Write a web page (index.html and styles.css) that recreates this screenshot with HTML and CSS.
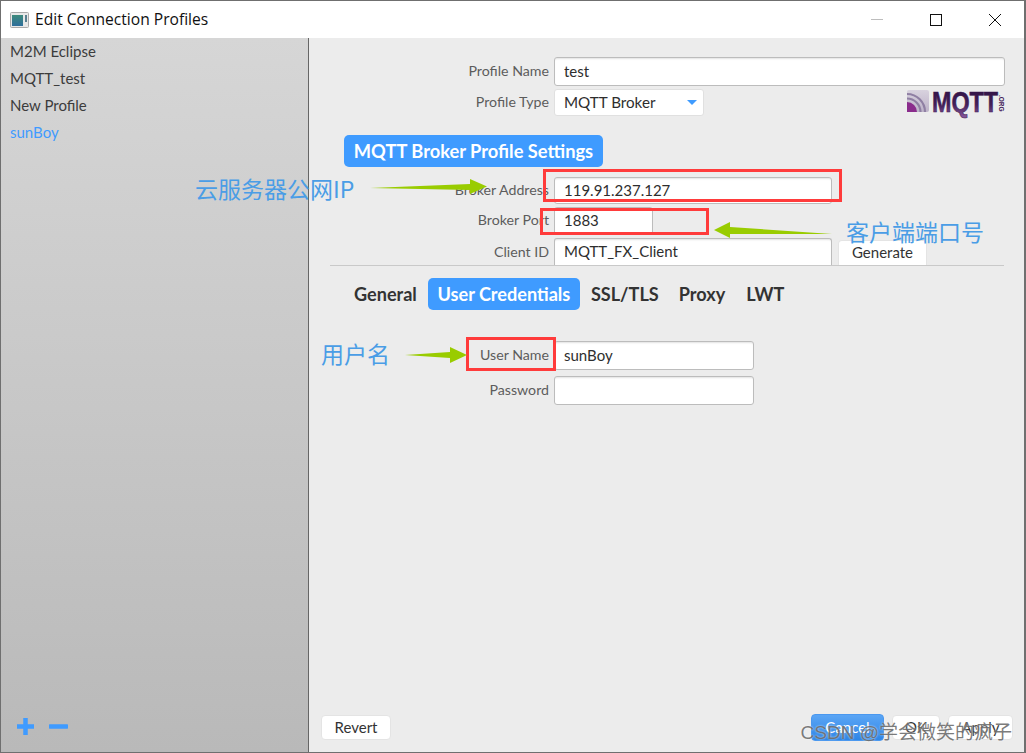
FILE: index.html
```html
<!DOCTYPE html>
<html lang="en">
<head>
<meta charset="utf-8">
<title>Edit Connection Profiles</title>
<link rel="stylesheet" href="styles.css">
</head>
<body>
<div class="window">
  <header class="titlebar">
    <svg class="app-icon" width="19" height="16" viewBox="0 0 19 16">
      <defs><linearGradient id="ai" x1="0" y1="0" x2="0" y2="1"><stop offset="0" stop-color="#3d8a7c"/><stop offset="1" stop-color="#2f6f9c"/></linearGradient></defs>
      <rect x="0.5" y="0.5" width="18" height="15" rx="1" fill="#e8e8e8" stroke="#aaa"/>
      <rect x="2" y="3" width="11" height="11" fill="url(#ai)"/>
      <rect x="15" y="3" width="2" height="7" fill="#5a7f8f"/>
    </svg>
    <span class="title">Edit Connection Profiles</span>
    <div class="win-controls">
      <svg width="14" height="14" viewBox="0 0 14 14"><path d="M1 6.5H13" stroke="#bdbdbd" stroke-width="1"/></svg>
      <svg width="14" height="14" viewBox="0 0 14 14"><rect x="1.5" y="1.5" width="11" height="11" fill="none" stroke="#111" stroke-width="1"/></svg>
      <svg width="14" height="14" viewBox="0 0 14 14"><path d="M1 1L13 13M13 1L1 13" stroke="#111" stroke-width="1"/></svg>
    </div>
  </header>
  <div class="content">
    <aside class="sidebar">
      <ul class="profiles">
        <li>M2M Eclipse</li>
        <li>MQTT_test</li>
        <li>New Profile</li>
        <li class="active">sunBoy</li>
      </ul>
      <div class="add-remove">
        <svg width="19" height="19" viewBox="0 0 19 19"><path d="M9.5 1V18M1 9.5H18" stroke="#3f9bff" stroke-width="4.5"/></svg>
        <svg width="19" height="19" viewBox="0 0 19 19"><path d="M1 9.5H18" stroke="#3f9bff" stroke-width="4.5" stroke-linecap="round"/></svg>
      </div>
    </aside>
    <main class="main">
      <div class="row row-name">
        <label>Profile Name</label>
        <input class="field" value="test" readonly>
      </div>
      <div class="row row-type">
        <label>Profile Type</label>
        <div class="select">MQTT Broker<span class="caret"></span></div>
        <svg class="mqtt-logo" width="98" height="26" viewBox="0 0 98 26">
          <defs>
            <linearGradient id="mq" x1="0" y1="0" x2="0" y2="1"><stop offset="0" stop-color="#2a0e3c"/><stop offset="0.6" stop-color="#43205a"/><stop offset="1" stop-color="#8a5aa0"/></linearGradient>
            <linearGradient id="mb" x1="0" y1="0" x2="0" y2="1"><stop offset="0" stop-color="#d8d2de"/><stop offset="1" stop-color="#bdb2c8"/></linearGradient>
          </defs>
          <rect x="0" y="0" width="22" height="22" rx="2" fill="url(#mb)"/>
          <path d="M0 22V12A10 10 0 0 1 10 22Z" fill="#8a2c8c"/>
          <path d="M0 8.500A13.500 13.500 0 0 1 13.500 22M0 4A18 18 0 0 1 18 22" fill="none" stroke="#8f7fa3" stroke-width="2.200"/>
          <text class="logo-word" x="25" y="22" textLength="66" lengthAdjust="spacingAndGlyphs" fill="url(#mq)" stroke="#3a1850">MQTT</text>
          <text class="logo-org" transform="translate(92 5) rotate(90)">.ORG</text>
        </svg>
      </div>
      <h2 class="section-pill">MQTT Broker Profile Settings</h2>
      <div class="row row-address">
        <label>Broker Address</label>
        <input class="field short" value="119.91.237.127" readonly>
      </div>
      <div class="row row-port">
        <label>Broker Port</label>
        <input class="field port" value="1883" readonly>
      </div>
      <div class="row row-client">
        <label>Client ID</label>
        <input class="field short client" value="MQTT_FX_Client" readonly>
        <button class="btn generate">Generate</button>
      </div>
      <nav class="tabs">
        <span class="tab">General</span>
        <span class="tab selected">User Credentials</span>
        <span class="tab">SSL/TLS</span>
        <span class="tab">Proxy</span>
        <span class="tab">LWT</span>
      </nav>
      <div class="row row-user">
        <label>User Name</label>
        <input class="field cred" value="sunBoy" readonly>
      </div>
      <div class="row row-pass">
        <label>Password</label>
        <input class="field cred" value="" readonly>
      </div>
      <footer class="footer">
        <button class="btn revert">Revert</button>
        <div class="footer-right">
          <button class="btn primary">Cancel</button>
          <button class="btn ok">OK</button>
          <button class="btn apply">Apply</button>
        </div>
      </footer>
    </main>
  </div>

  <div class="redbox box-address"></div>
  <div class="redbox box-port"></div>
  <div class="redbox box-user"></div>

  <svg class="arrows" width="1026" height="753" viewBox="0 0 1026 753">
    <path d="M370 188L470 184V179L487 186.500L470 194V190Z" fill="#99cc00"/>
    <path d="M832 234L730 227V222L714 230L730 238V234Z" fill="#99cc00"/>
    <path d="M405 355L450 352V347L467 355L450 363V358Z" fill="#99cc00"/>
  </svg>
  <div class="note note-ip">云服务器公网IP</div>
  <div class="note note-port">客户端端口号</div>
  <div class="note note-user">用户名</div>
  <div class="watermark">CSDN @学会微笑的疯子</div>
</div>
</body>
</html>
```
FILE: styles.css
```css
* { box-sizing: border-box; }
html, body { margin: 0; padding: 0; }
body { width: 1026px; height: 753px; overflow: hidden; font-family: "Lato", "Noto Sans", sans-serif; }

.window {
  position: relative;
  width: 1026px;
  height: 753px;
  display: flex;
  flex-direction: column;
  background: #ececec;
  border: 1px solid #6f6f6f;
  border-right-width: 2px;
}

.titlebar {
  height: 37px;
  flex: none;
  display: flex;
  align-items: center;
  background: #fff;
  padding-left: 9px;
}
.app-icon { margin-right: 6px; }
.title { font: 15.6px "Open Sans", "Noto Sans", sans-serif; color: #111; margin-top: -2px; }
.win-controls { margin-left: auto; display: flex; gap: 45px; padding-right: 22px; }

.content { flex: 1; display: flex; min-height: 0; }

.sidebar {
  width: 308px;
  flex: none;
  display: flex;
  flex-direction: column;
  justify-content: space-between;
  background: linear-gradient(#d6d6d6, #b9b9b9);
  border-right: 1px solid #666;
}
.profiles { list-style: none; margin: 0; padding: 0; }
.profiles li { height: 27px; line-height: 27px; padding-left: 9px; font-size: 15px; color: #3c3c3c; }
.profiles li.active { color: #3f9bff; }
.add-remove { display: flex; gap: 14px; padding: 0 0 16px 15px; }

.main { flex: 1; display: flex; flex-direction: column; min-width: 0; }

.row {
  display: grid;
  grid-template-columns: 240px auto auto 1fr;
  column-gap: 5px;
  align-items: center;
  justify-items: start;
}
.row label { justify-self: end; font-size: 14.2px; color: #5c5c5c; margin-top: -3px; }

.field {
  display: block;
  padding: 0 9px 2px;
  margin: 0;
  font: 15px "Lato", sans-serif;
  color: #2e2e2e;
  background: #fff;
  border: 1px solid #bcbcbc;
  border-radius: 3px;
  box-shadow: inset 0 2px 2px -1px #e2e2e2;
  outline: none;
}

.row-name { margin-top: 19px; }
.row-name .field { width: 451px; height: 29px; grid-column: 2 / 5; }
.row-type { margin-top: 3px; height: 27px; grid-template-columns: 240px 150px 1fr; grid-template-rows: 27px; }
.select {
  width: 150px;
  height: 27px;
  display: flex;
  align-items: center;
  justify-content: space-between;
  padding: 0 6px 2px 9px;
  font-size: 15.2px;
  color: #2e2e2e;
  background: #fff;
  border: 1px solid #e0e0e0;
  border-radius: 3px;
}
.caret { width: 0; height: 0; border: 5px solid transparent; border-top: 5px solid #3f9bff; border-bottom: 0; margin-top: 2px; }
.mqtt-logo { justify-self: end; align-self: start; margin: 1px 19px 0 0; overflow: visible; }
.logo-word { font: bold 30px "Liberation Sans", sans-serif; stroke-width: 0.6px; }
.logo-org { font: bold 6.5px "Liberation Sans", sans-serif; fill: #43205a; }

.section-pill {
  align-self: flex-start;
  margin: 19px 0 0 35px;
  width: 259px;
  height: 32px;
  line-height: 32px;
  text-align: center;
  font-size: 18.3px;
  font-weight: 700;
  color: #fff;
  background: #3f9bff;
  border-radius: 5px;
}

.row-address { margin-top: 10px; }
.field.short { width: 278px; height: 27px; }
.row-port { margin-top: 3px; }
.field.port { width: 99px; height: 28px; }
.row-client { margin-top: 3px; grid-template-columns: 240px 278px 89px 1fr; column-gap: 5px; }
.row-client label { margin-top: -1px; }
.field.client { border-bottom: 0; border-radius: 3px 3px 0 0; }
.btn {
  font: 15px "Lato", sans-serif;
  color: #333;
  background: #fff;
  border: 1px solid #e4e4e4;
  border-radius: 4px;
  padding: 0 0 2px;
  height: 25px;
}
.generate { width: 89px; margin-left: 1px; margin-top: 2px; border-bottom: 0; border-radius: 4px 4px 0 0; }

.tabs {
  margin: 0 20px 0 21px;
  padding: 12px 0 0 24px;
  border-top: 1px solid #c9c9c9;
  display: flex;
  gap: 11px;
}
.tab {
  height: 32px;
  line-height: 32px;
  font-size: 18.1px;
  font-weight: 700;
  color: #333;
}
.tab.selected { width: 152px; text-align: center; color: #fff; background: #3f9bff; border-radius: 5px; }
.tab:nth-child(3) { margin-right: 9px; }
.tab:nth-child(4) { margin-right: 10px; }

.row-user { margin-top: 31px; }
.row-pass { margin-top: 6px; }
.field.cred { width: 200px; height: 29px; }

.footer {
  margin-top: auto;
  padding: 0 11px 11px 12px;
  display: flex;
  justify-content: space-between;
  align-items: center;
}
.footer-right { display: flex; gap: 8px; align-items: center; }
.revert { width: 70px; }
.primary { width: 73px; height: 27px; color: #fff; background: linear-gradient(#5aa5f5, #2f86e6); border-color: #4a98ef; }
.ok { width: 48px; }
.apply { width: 65px; }

.redbox { position: absolute; border: 3px solid #ff3b3b; pointer-events: none; }
.box-address { left: 542px; top: 168px; width: 299px; height: 33px; }
.box-port { left: 539px; top: 207px; width: 169px; height: 27px; }
.box-user { left: 465px; top: 336px; width: 90px; height: 34px; }

.arrows { position: absolute; left: -1px; top: -1px; pointer-events: none; }

.note {
  position: absolute;
  font: 23px/30px "Noto Sans CJK SC", "Noto Sans", sans-serif;
  color: #4a9de6;
  white-space: nowrap;
}
.note-ip { left: 194px; top: 172px; }
.note-port { left: 845px; top: 215px; }
.note-user { left: 320px; top: 337px; }

.watermark {
  position: absolute;
  right: 12px;
  bottom: 8px;
  font: 19px/22px "Liberation Sans", "Noto Sans CJK SC", sans-serif;
  color: rgba(100, 100, 100, 0.85);
  text-shadow: 0 0 2px rgba(255, 255, 255, 0.8);
  white-space: nowrap;
}
```
